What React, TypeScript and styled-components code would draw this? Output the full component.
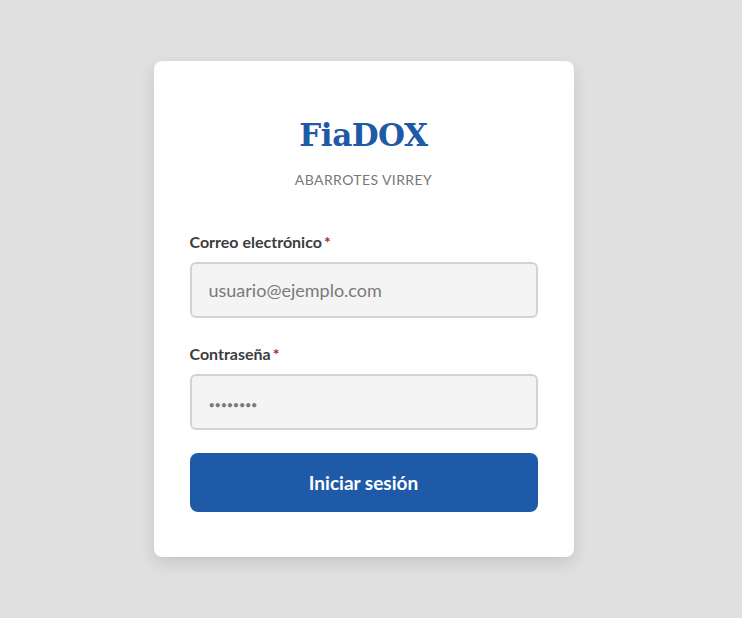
import { FC } from 'react';
import styled, { createGlobalStyle } from 'styled-components';

const GlobalStyle = createGlobalStyle`
  html, body {
    margin: 0;
    padding: 0;
    background: #e0e0e0;
    font-family: Lato, "Noto Sans", sans-serif;
  }
`;

const Page = styled.div`
  min-height: 618px;
  display: flex;
  align-items: center;
  justify-content: center;
  padding-right: 15px;
  box-sizing: border-box;
`;

const Card = styled.form`
  width: 420px;
  box-sizing: border-box;
  padding: 54px 36px 45px;
  background: #ffffff;
  border-radius: 8px;
  box-shadow: 0 6px 16px rgba(0, 0, 0, 0.12);
  display: flex;
  flex-direction: column;
`;

const Brand = styled.h1`
  margin: 0;
  text-align: center;
  font-family: "DejaVu Serif", "Liberation Serif", serif;
  font-size: 31px;
  font-weight: 700;
  color: #1f5aa6;
  line-height: 40px;
  letter-spacing: -0.5px;
`;

const Subtitle = styled.div`
  margin-top: 16px;
  text-align: center;
  font-size: 14px;
  color: #777777;
  letter-spacing: 0.4px;
`;

const Field = styled.div<{ $first?: boolean }>`
  display: flex;
  flex-direction: column;
  gap: 11px;
  margin-top: ${(p) => (p.$first ? '44px' : '26px')};
`;

const Label = styled.label`
  font-size: 16px;
  font-weight: 700;
  color: #3d3d3d;
`;

const Required = styled.span`
  color: #b3262b;
  margin-left: 2px;
`;

const Input = styled.input<{ $masked?: boolean }>`
  height: 56px;
  box-sizing: border-box;
  border: 2px solid #d3d3d3;
  border-radius: 6px;
  background: #f4f4f4;
  padding: 0 17px;
  font-family: Lato, "Noto Sans", sans-serif;
  font-size: 18px;
  color: #555;
  outline: none;
  &::placeholder {
    color: #7a7a7a;
    font-size: ${(p) => (p.$masked ? '11px' : '18px')};
    letter-spacing: ${(p) => (p.$masked ? '-0.3px' : '0')};
  }
`;

const Submit = styled.button`
  margin-top: 23px;
  height: 59px;
  border: none;
  border-radius: 8px;
  background: #1e5aa8;
  color: #ffffff;
  font-family: Lato, "Noto Sans", sans-serif;
  font-size: 19px;
  font-weight: 700;
  cursor: pointer;
`;

const App: FC = () => {
  return (
    <>
      <GlobalStyle />
      <Page>
        <Card onSubmit={(e) => e.preventDefault()}>
          <Brand>FiaDOX</Brand>
          <Subtitle>ABARROTES VIRREY</Subtitle>
          <Field $first>
            <Label htmlFor="email">
              Correo electrónico<Required>*</Required>
            </Label>
            <Input id="email" type="email" placeholder="usuario@ejemplo.com" />
          </Field>
          <Field>
            <Label htmlFor="password">
              Contraseña<Required>*</Required>
            </Label>
            <Input id="password" type="password" $masked placeholder="••••••••" />
          </Field>
          <Submit type="submit">Iniciar sesión</Submit>
        </Card>
      </Page>
    </>
  );
};

export default App;
